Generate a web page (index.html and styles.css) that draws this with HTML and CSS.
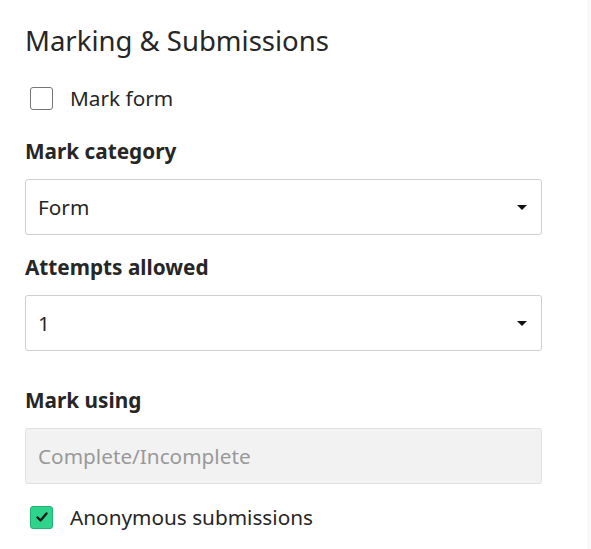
FILE: index.html
```html
<!DOCTYPE html>
<html lang="en">
<head>
    <meta charset="UTF-8">
    <title>Marking &amp; Submissions</title>
    <link rel="stylesheet" href="styles.css">
</head>
<body>
    <div class="panel">
        <h2 class="title">Marking &amp; Submissions</h2>

        <label class="check-row">
            <span class="checkbox"></span>
            <span>Mark form</span>
        </label>

        <div class="field">
            <div class="field-label">Mark category</div>
            <div class="select">
                <span>Form</span>
                <span class="caret"></span>
            </div>
        </div>

        <div class="field">
            <div class="field-label">Attempts allowed</div>
            <div class="select">
                <span>1</span>
                <span class="caret"></span>
            </div>
        </div>

        <div class="field field-gap">
            <div class="field-label">Mark using</div>
            <div class="select disabled">
                <span>Complete/Incomplete</span>
            </div>
        </div>

        <label class="check-row check-bottom">
            <span class="checkbox checked">
                <svg width="14" height="14" viewBox="0 0 14 14">
                    <path d="M2.5 7.5 L5.5 10.5 L11.5 3.5" fill="none" stroke="#1a1a1a" stroke-width="2.4" stroke-linecap="round" stroke-linejoin="round"/>
                </svg>
            </span>
            <span>Anonymous submissions</span>
        </label>
    </div>
    <div class="scroll-strip"></div>
</body>
</html>
```

FILE: styles.css
```css
/* Page */
body {
    margin: 0;
    font-family: 'Noto Sans', sans-serif;
    color: #262626;
    background: #fff;
    display: flex;
    min-height: 549px;
}

.panel {
    flex: 1;
    padding: 23px 0 0 25px;
}

.scroll-strip {
    width: 4px;
    background: #f8f8f8;
}

/* Heading */
.title {
    margin: 0;
    font-size: 27.5px;
    font-weight: 400;
    line-height: 36px;
}

/* Checkbox rows */
.check-row {
    display: flex;
    align-items: center;
    gap: 17px;
    font-size: 20.75px;
    line-height: 28px;
    margin: 25px 0 0 5px;
}

.checkbox {
    width: 21px;
    height: 21px;
    border: 1px solid #767676;
    border-radius: 3px;
    display: flex;
    align-items: center;
    justify-content: center;
}

.checkbox.checked {
    background: #2ed38c;
    border-color: #1fb373;
}

.check-bottom {
    margin-top: 19px;
}

/* Fields */
.field {
    width: 517px;
    margin-top: 25px;
}

.field + .field {
    margin-top: 18px;
}

.field.field-gap {
    margin-top: 35px;
}

.field-label {
    font-size: 20.75px;
    font-weight: 700;
    line-height: 28px;
    margin-bottom: 14px;
}

.select {
    height: 54px;
    border: 1px solid #cfcfcf;
    border-radius: 3px;
    padding: 0 14px 0 12px;
    display: flex;
    align-items: center;
    justify-content: space-between;
    font-size: 20.75px;
}

.caret {
    width: 0;
    height: 0;
    border-left: 5px solid transparent;
    border-right: 5px solid transparent;
    border-top: 5px solid #111;
}

.select.disabled {
    background: #f2f2f2;
    color: #999;
    border-color: #e0e0e0;
}
```
